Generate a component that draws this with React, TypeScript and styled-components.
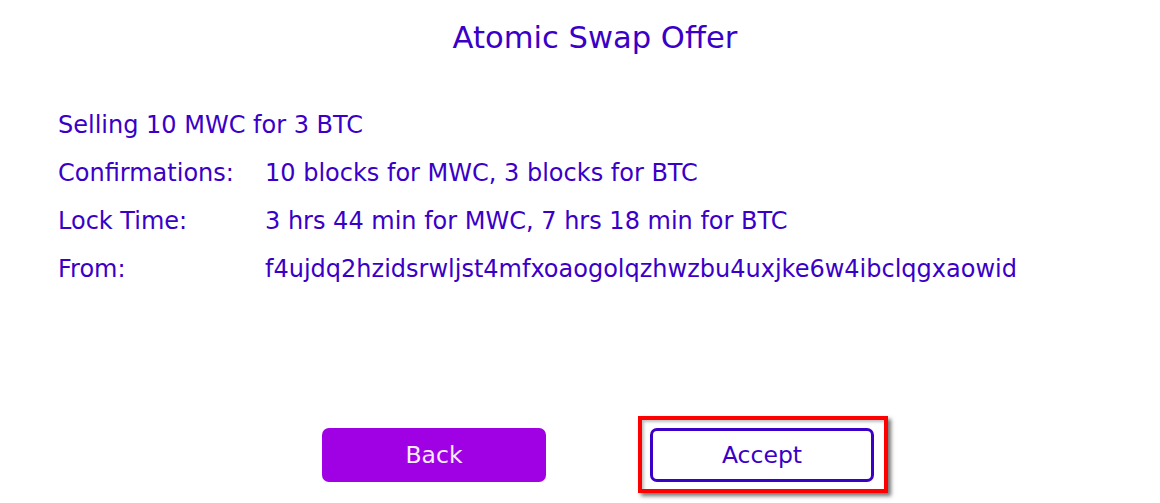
import React from "react";
import styled, { createGlobalStyle } from "styled-components";

const GlobalStyle = createGlobalStyle`
  html, body { margin: 0; padding: 0; background: #ffffff; }
  body { font-family: "DejaVu Sans", "Liberation Sans", sans-serif; }
`;

const INK = "#3a00c8";

const Page = styled.div`
  width: 1160px;
  height: 503px;
  box-sizing: border-box;
  padding-top: 20px;
  display: flex;
  flex-direction: column;
  color: ${INK};
`;

const Title = styled.h1`
  margin: 0;
  padding-left: 30px;
  font-size: 30.6px;
  line-height: 36px;
  font-weight: normal;
  text-align: center;
`;

const Details = styled.div`
  margin: 45px 0 0 58px;
  display: grid;
  grid-template-columns: 207px auto;
  font-size: 24px;
  line-height: 48px;
`;

const Summary = styled.div`
  grid-column: 1 / span 2;
`;

const Label = styled.div``;
const Value = styled.div`
  white-space: nowrap;
`;

const Actions = styled.div`
  margin-top: 135px;
  padding-left: 36px;
  display: flex;
  justify-content: center;
  gap: 104px;
`;

const Button = styled.button<{ $primary?: boolean; $focused?: boolean }>`
  position: relative;
  width: 224px;
  height: 54px;
  box-sizing: border-box;
  font-family: "DejaVu Sans", "Liberation Sans", sans-serif;
  font-size: 23.5px;
  border-radius: 7px;
  cursor: pointer;
  background: ${(p) => (p.$primary ? "#a000e4" : "#ffffff")};
  color: ${(p) => (p.$primary ? "#f6ecff" : INK)};
  border: ${(p) => (p.$primary ? "none" : `3px solid ${INK}`)};
  padding: 0;

  ${(p) =>
    p.$focused &&
    `
    &::after {
      content: "";
      position: absolute;
      left: -15px;
      top: -15px;
      right: -17px;
      bottom: -14px;
      border: 4px solid #ff0000;
      box-shadow: 3px 3px 4px rgba(0, 0, 0, 0.55), inset 2px 2px 3px rgba(0, 0, 0, 0.25);
      pointer-events: none;
    }
  `}
`;

export default function App() {
  return (
    <>
      <GlobalStyle />
      <Page>
        <Title>Atomic Swap Offer</Title>
        <Details>
          <Summary>Selling 10 MWC for 3 BTC</Summary>
          <Label>Confirmations:</Label>
          <Value>10 blocks for MWC, 3 blocks for BTC</Value>
          <Label>Lock Time:</Label>
          <Value>3 hrs 44 min for MWC, 7 hrs 18 min for BTC</Value>
          <Label>From:</Label>
          <Value>f4ujdq2hzidsrwljst4mfxoaogolqzhwzbu4uxjke6w4ibclqgxaowid</Value>
        </Details>
        <Actions>
          <Button $primary>Back</Button>
          <Button $focused>Accept</Button>
        </Actions>
      </Page>
    </>
  );
}
